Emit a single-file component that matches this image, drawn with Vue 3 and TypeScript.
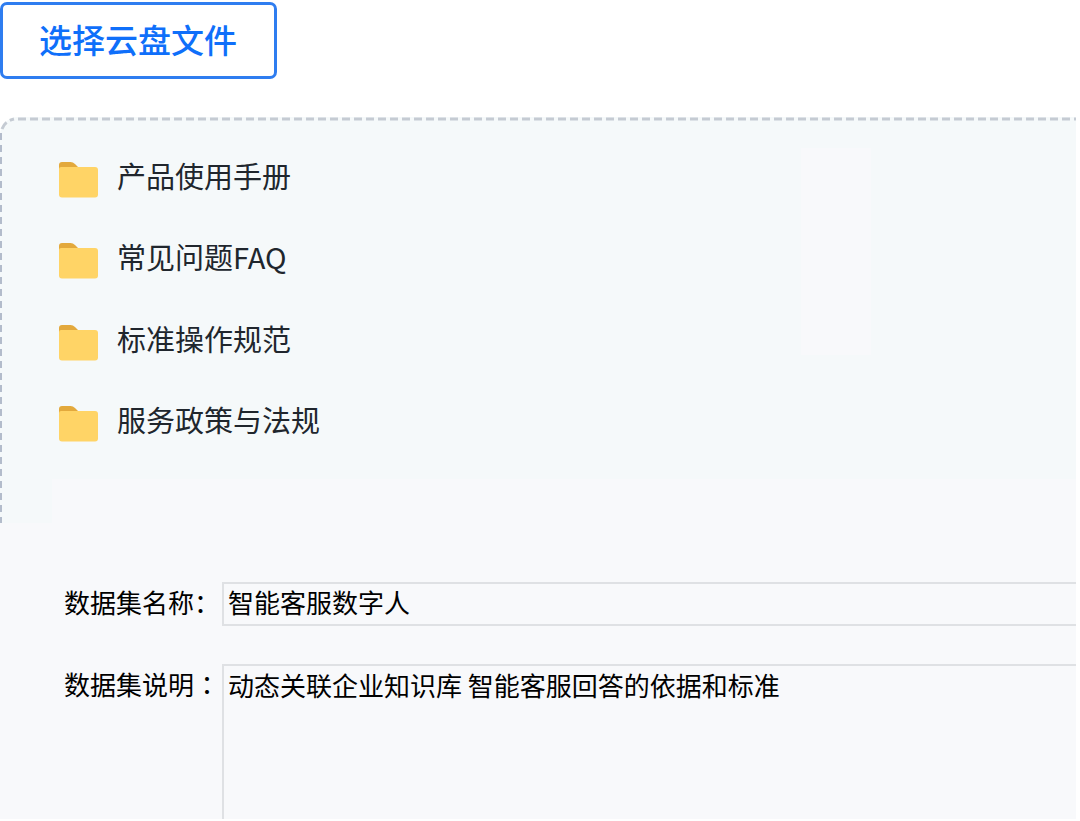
<script setup lang="ts">
import { ref } from 'vue'

interface Folder {
  id: number
  name: string
}

const folders: Folder[] = [
  { id: 1, name: '产品使用手册' },
  { id: 2, name: '常见问题FAQ' },
  { id: 3, name: '标准操作规范' },
  { id: 4, name: '服务政策与法规' },
]

const datasetName = ref('智能客服数字人')
const datasetNote = ref('动态关联企业知识库 智能客服回答的依据和标准')
</script>

<template>
  <main class="page">
    <button type="button" class="pick">选择云盘文件</button>

    <section class="panel">
      <svg class="outline" aria-hidden="true">
        <line class="dash top" x1="18" y1="2" x2="100%" y2="2" />
        <path class="dash corner" d="M2 12 Q5 4 14 2" />
        <line class="dash side" x1="0" y1="16" x2="0" y2="100%" />
      </svg>
      <div class="panel-body">
        <ul class="folders">
          <li v-for="folder in folders" :key="folder.id" class="folder">
            <svg class="folder-icon" viewBox="0 0 40 40" aria-hidden="true">
              <path d="M0 15V7Q0 4 3 4H11.500Q14 4 16 6L20 10V15Z" fill="#e3a93c" />
              <path d="M0 11Q0 9 2 9H36Q39 9 39 12V36.500Q39 39.500 36 39.500H3Q0 39.500 0 36.500Z" fill="#ffd466" />
            </svg>
            <span class="folder-name">{{ folder.name }}</span>
          </li>
        </ul>
        <div class="slot"></div>
      </div>
      <div class="panel-foot"></div>
    </section>

    <form class="form" @submit.prevent>
      <label class="label" for="dataset-name">数据集名称：</label>
      <input id="dataset-name" v-model="datasetName" class="field" type="text" />
      <label class="label" for="dataset-note">数据集说明<span class="wide-colon" lang="zh-TW">：</span></label>
      <textarea id="dataset-note" v-model="datasetNote" class="field area"></textarea>
    </form>
  </main>
</template>

<style>
body {
  margin: 0;
  background: #fff;
}
</style>

<style scoped>
.page {
  margin-right: 4px;
  padding-top: 2px;
  font-family: "Noto Sans CJK SC", sans-serif;
}

.pick {
  display: block;
  box-sizing: border-box;
  height: 77px;
  padding: 0 37px 4px 36px;
  border: 3px solid #2f7df0;
  border-radius: 7px;
  background: #fff;
  color: #0f6ffa;
  font-family: inherit;
  font-size: 33px;
  font-weight: 500;
  line-height: 66px;
}

.panel {
  position: relative;
  margin-top: 38px;
  border-top-left-radius: 18px;
  background: #f5f9fa;
}

.outline {
  position: absolute;
  inset: 0;
  width: 100%;
  height: 100%;
}

.dash {
  fill: none;
  stroke: #c5cbd3;
  stroke-width: 3;
  stroke-dasharray: 8 4;
}

.side {
  stroke: #b3bccb;
  stroke-width: 4;
  stroke-dasharray: 7 5;
}

.panel-body {
  display: flex;
  justify-content: space-between;
  align-items: flex-start;
  padding: 20px 205px 16px 59px;
}

.folders {
  display: grid;
  grid-auto-rows: 1fr;
  height: 326px;
  margin: 0;
  padding: 0;
  list-style: none;
}

.folder {
  display: flex;
  align-items: center;
  gap: 18px;
  color: #20262d;
  font-size: 29px;
  line-height: 40px;
}

.folder-name {
  padding-bottom: 6px;
}

.folder-icon {
  width: 40px;
  height: 40px;
}

.slot {
  width: 70px;
  height: 207px;
  margin-top: 11px;
  background: #f8f9fb;
}

.panel-foot {
  height: 44px;
  margin-left: 52px;
  background: #f8f9fb;
}

.form {
  display: grid;
  grid-template-columns: 158px 1fr;
  row-gap: 38px;
  align-items: start;
  padding: 59px 0 0 64px;
  background: #f8f9fb;
}

.label {
  color: #000;
  font-size: 26px;
  line-height: 40px;
  white-space: nowrap;
}

.wide-colon {
  font-family: "Noto Sans CJK TC", sans-serif;
}

.field {
  box-sizing: border-box;
  width: 100%;
  height: 44px;
  margin: 0;
  padding: 0 4px 6px;
  border: 2px solid #dfe1e4;
  border-right: 0;
  border-radius: 0;
  background: transparent;
  color: #000;
  font-family: inherit;
  font-size: 26px;
  line-height: 38px;
  outline: 0;
}

.area {
  display: block;
  height: 155px;
  border-bottom: 0;
  resize: none;
}
</style>
